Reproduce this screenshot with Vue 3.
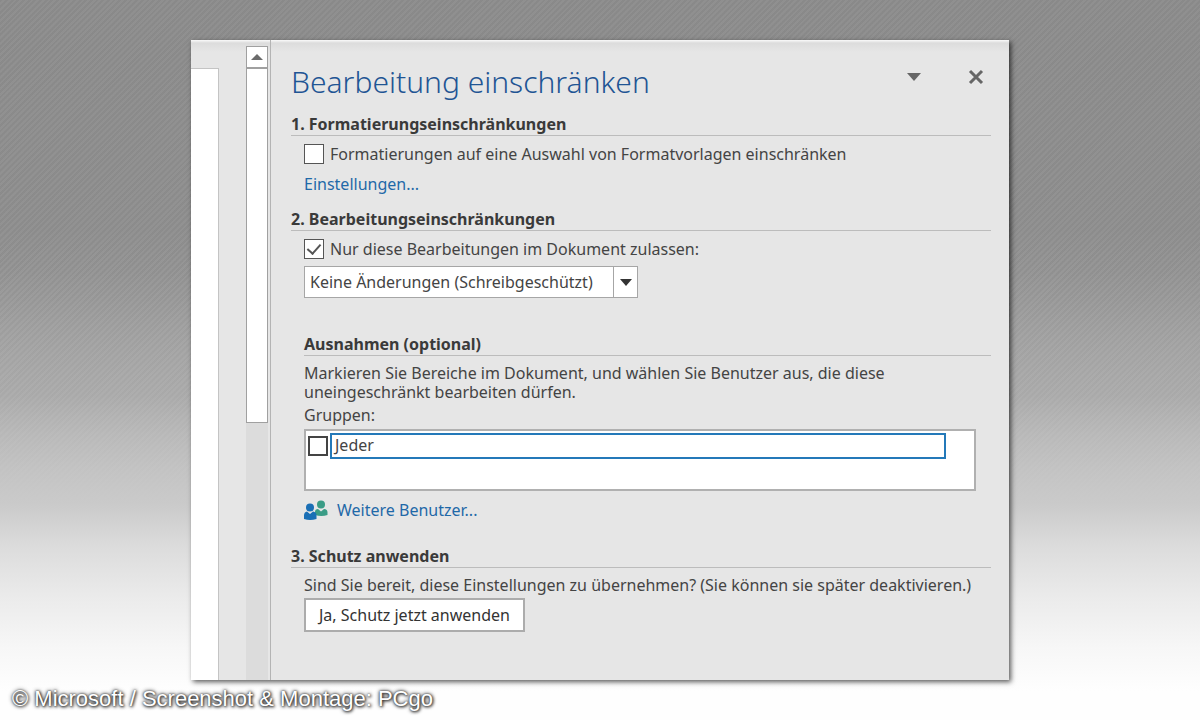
<script setup>
import { ref } from 'vue'

const restrictFormatting = ref(false)
const allowOnly = ref(true)
const everyone = ref(false)
const mode = ref('Keine Änderungen (Schreibgeschützt)')
const modes = [
  'Keine Änderungen (Schreibgeschützt)',
  'Überarbeitungen',
  'Kommentare',
  'Ausfüllen von Formularen',
]
</script>

<template>
  <div class="stage">
    <main class="window">
      <div class="document">
        <div class="sheet"></div>
        <div class="scrollbar">
          <button class="scroll-up" type="button" aria-label="Nach oben">
            <svg width="12" height="6" viewBox="0 0 12 6"><path d="M6 0l6 6H0z" fill="#6b6b6b" /></svg>
          </button>
          <div class="thumb"></div>
        </div>
      </div>

      <aside class="pane">
        <header class="pane-head">
          <h1>Bearbeitung einschränken</h1>
          <button class="tool" type="button" aria-label="Optionen">
            <svg width="14" height="8" viewBox="0 0 14 8"><path d="M0 0h14L7 8z" fill="#666" /></svg>
          </button>
          <button class="tool" type="button" aria-label="Schließen">
            <svg width="16" height="16" viewBox="0 0 16 16"><path d="M2 2l12 12M14 2L2 14" stroke="#666" stroke-width="3" /></svg>
          </button>
        </header>

        <section>
          <h2>1. Formatierungseinschränkungen</h2>
          <div class="body">
            <label class="check">
              <input v-model="restrictFormatting" type="checkbox" />
              <span>Formatierungen auf eine Auswahl von Formatvorlagen einschränken</span>
            </label>
            <a class="settings" href="#">Einstellungen...</a>
          </div>
        </section>

        <section>
          <h2>2. Bearbeitungseinschränkungen</h2>
          <div class="body">
            <label class="check">
              <input v-model="allowOnly" type="checkbox" />
              <span>Nur diese Bearbeitungen im Dokument zulassen:</span>
            </label>
            <div class="combo">
              <select v-model="mode" aria-label="Zulässige Bearbeitungen">
                <option v-for="m in modes" :key="m">{{ m }}</option>
              </select>
              <span class="combo-arrow">
                <svg width="12" height="7" viewBox="0 0 12 7"><path d="M0 0h12L6 7z" fill="#333" /></svg>
              </span>
            </div>
          </div>
        </section>

        <section class="exceptions">
          <h2>Ausnahmen (optional)</h2>
          <p class="hint">
            Markieren Sie Bereiche im Dokument, und wählen Sie Benutzer aus, die diese<br />
            uneingeschränkt bearbeiten dürfen.
          </p>
          <p class="groups-label">Gruppen:</p>
          <div class="groups">
            <input id="everyone" v-model="everyone" type="checkbox" />
            <label for="everyone">Jeder</label>
          </div>
          <a class="more" href="#">
            <svg width="24" height="20" viewBox="0 0 24 20">
              <g fill="#3a9c86">
                <circle cx="17" cy="4.500" r="4" />
                <path d="M11 15V12q0-3 3-3l3 2.500L20 9q3.500 0 3.500 3.500V15q-6 2-12.500 0z" />
              </g>
              <path d="M0 19v-3.500Q0 12 3 11.500L6 14l3-2.500q3.500 .5 3.500 4V19q-6.500 2-12.500 0z" fill="#1a6fb5" />
              <circle cx="6" cy="7.500" r="4" fill="#1a6fb5" />
            </svg>
            <span>Weitere Benutzer...</span>
          </a>
        </section>

        <section class="apply">
          <h2>3. Schutz anwenden</h2>
          <div class="body">
            <p>Sind Sie bereit, diese Einstellungen zu übernehmen? (Sie können sie später deaktivieren.)</p>
            <button class="apply-button" type="button">Ja, Schutz jetzt anwenden</button>
          </div>
        </section>
      </aside>
    </main>
    <footer>© Microsoft / Screenshot &amp; Montage: PCgo</footer>
  </div>
</template>

<style>
body {
  margin: 0;
}
</style>

<style scoped>
* {
  box-sizing: border-box;
}

.stage {
  min-height: 100vh;
  display: flex;
  flex-direction: column;
  padding-top: 40px;
  background:
    linear-gradient(rgba(140, 140, 140, 0.1), rgba(146, 146, 146, 0.1) 38%, rgba(173, 173, 173, 0.5) 55%, #cacaca 70%, #dcdcdc 76%, #ebebeb 83%, #f7f7f7 90%, #fefefe 96%),
    repeating-linear-gradient(135deg, rgba(0, 0, 0, 0.05) 0 2px, transparent 2px 4px),
    linear-gradient(#909090, #929292 32%, #9c9c9c 42%, #b0b0b0 56%, #cacaca 70%);
  font-family: "Noto Sans", "Open Sans", sans-serif;
  font-size: 16px;
  line-height: 20px;
  color: #444;
}

.window {
  flex: 1;
  display: flex;
  margin: 0 191px;
  background: linear-gradient(#fafafa, #dcdcdc 3px, #e6e6e6 12px);
  box-shadow: 2px 2px 5px rgba(0, 0, 0, 0.65);
}

.document {
  display: flex;
  justify-content: space-between;
  flex: 0 0 80px;
  padding-right: 2px;
  border-right: 1px solid #b4b4b4;
}

.sheet {
  width: 28px;
  margin-top: 28px;
  background: #fff;
  border: solid #c4c4c4;
  border-width: 1px 1px 0 0;
}

.scrollbar {
  display: flex;
  flex-direction: column;
  width: 22px;
  margin-top: 6px;
  background: #dcdcdc;
}

.scroll-up {
  display: grid;
  place-items: center;
  height: 22px;
  padding: 0;
  background: #fff;
  border: 1px solid #a0a0a0;
}

.thumb {
  height: 355px;
  background: #fff;
  border: 1px solid #a0a0a0;
}

.pane {
  flex: 1;
  padding: 20px 18px 40px 20px;
}

.pane-head {
  display: flex;
  align-items: center;
  height: 44px;
  margin-bottom: 10px;
}

h1 {
  flex: 1;
  margin: 0;
  font-size: 30px;
  font-weight: 300;
  line-height: 44px;
  color: #1f5594;
}

.tool {
  display: grid;
  place-items: center;
  width: 30px;
  height: 30px;
  margin: 0 0 10px 32px;
  padding: 0;
  background: none;
  border: 0;
}

h2 {
  margin: 0 0 8px;
  border-bottom: 1px solid #bcbcbc;
  font-size: 16px;
  font-weight: 700;
  line-height: 21px;
  color: #3a3a3a;
}

p {
  margin: 0;
}

a {
  color: #1f69a8;
  text-decoration: none;
}

section {
  margin-bottom: 15px;
}

.body {
  padding-left: 13px;
}

.check {
  display: flex;
  align-items: center;
  gap: 6px;
}

input[type="checkbox"] {
  appearance: none;
  display: grid;
  place-items: center;
  flex: none;
  width: 20px;
  height: 20px;
  margin: 0;
  background: #fff;
  border: 1px solid #555;
}

input[type="checkbox"]:checked::before {
  content: "";
  width: 6px;
  height: 11px;
  margin-bottom: 3px;
  border: solid #555;
  border-width: 0 2px 2px 0;
  transform: rotate(42deg);
}

.settings {
  display: block;
  margin-top: 10px;
}

.combo {
  display: grid;
  grid-template-columns: 1fr 24px;
  width: 334px;
  height: 32px;
  margin-top: 7px;
  background: #fff;
  border: 1px solid #a6a6a6;
}

select {
  grid-area: 1 / 1 / 2 / 3;
  appearance: none;
  padding: 0 24px 0 5px;
  background: none;
  border: 0;
  font: inherit;
  color: inherit;
}

.combo-arrow {
  grid-area: 1 / 2;
  display: grid;
  place-items: center;
  border-left: 1px solid #a6a6a6;
  pointer-events: none;
}

.exceptions {
  margin: 36px 0 26px 13px;
}

.hint {
  line-height: 19px;
}

.groups-label {
  margin: 3px 0 4px;
}

.groups {
  display: flex;
  align-items: flex-start;
  gap: 2px;
  height: 62px;
  margin-right: 15px;
  padding: 2px 28px 0 2px;
  background: #fff;
  border: 2px solid #b0b0b0;
}

.groups input[type="checkbox"] {
  margin-top: 3px;
  border: 2px solid #444;
}

.groups label {
  flex: 1;
  padding: 0 3px 2px;
  border: 2px solid #2479b9;
}

.more {
  display: flex;
  align-items: center;
  gap: 9px;
  margin-top: 9px;
}

.apply {
  margin: 0;
}

.apply h2 {
  margin-bottom: 7px;
}

.apply-button {
  height: 34px;
  margin-top: 3px;
  padding: 0 13px;
  background: #fff;
  border: 2px solid #acacac;
  font: inherit;
  color: #333;
}

footer {
  padding: 6px 12px 8px;
  font-family: "Liberation Sans", Arial, sans-serif;
  font-size: 22px;
  line-height: 26px;
  color: #fff;
  text-shadow: 0 0 4px #222, 1px 1px 3px #333, 0 0 2px #666;
}
</style>
